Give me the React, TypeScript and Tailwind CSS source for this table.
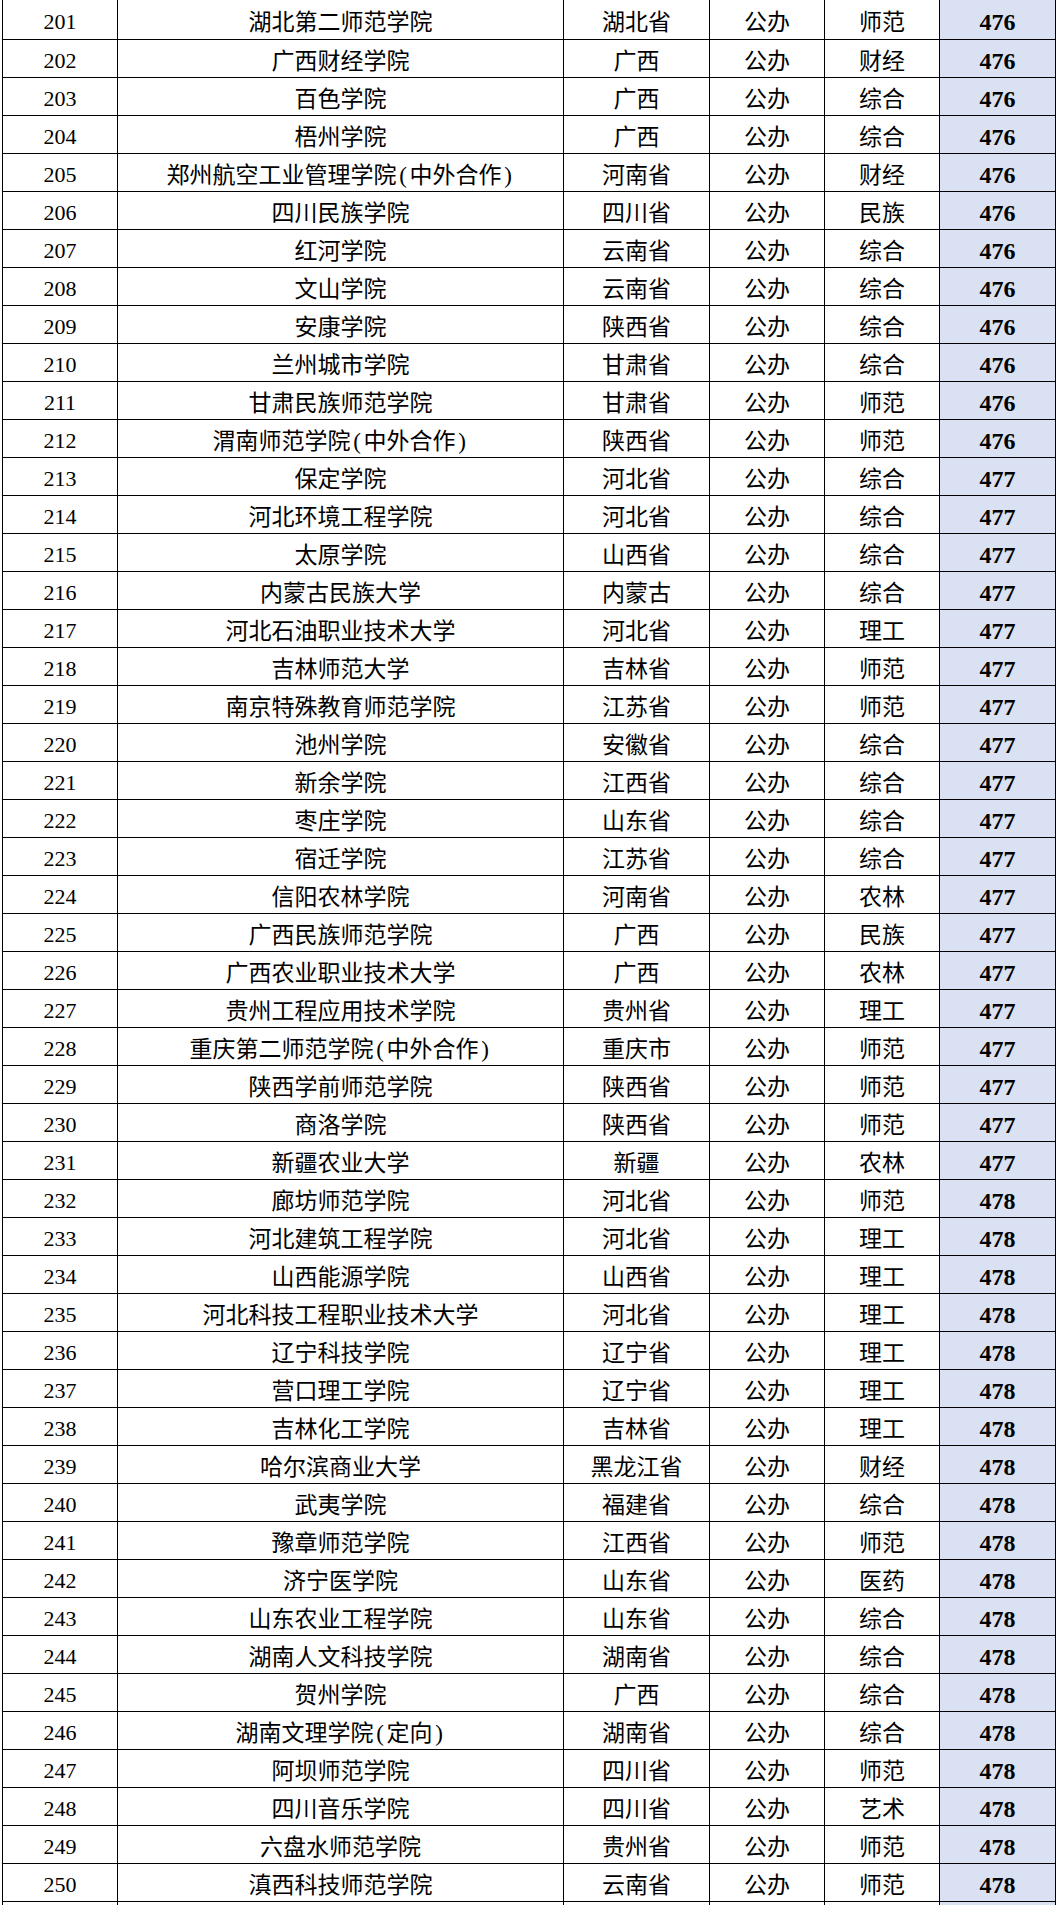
import React from 'react';

type School = [number, string, string, string, string, number];

const schools: School[] = [
  [201, '湖北第二师范学院', '湖北省', '公办', '师范', 476],
  [202, '广西财经学院', '广西', '公办', '财经', 476],
  [203, '百色学院', '广西', '公办', '综合', 476],
  [204, '梧州学院', '广西', '公办', '综合', 476],
  [205, '郑州航空工业管理学院(中外合作)', '河南省', '公办', '财经', 476],
  [206, '四川民族学院', '四川省', '公办', '民族', 476],
  [207, '红河学院', '云南省', '公办', '综合', 476],
  [208, '文山学院', '云南省', '公办', '综合', 476],
  [209, '安康学院', '陕西省', '公办', '综合', 476],
  [210, '兰州城市学院', '甘肃省', '公办', '综合', 476],
  [211, '甘肃民族师范学院', '甘肃省', '公办', '师范', 476],
  [212, '渭南师范学院(中外合作)', '陕西省', '公办', '师范', 476],
  [213, '保定学院', '河北省', '公办', '综合', 477],
  [214, '河北环境工程学院', '河北省', '公办', '综合', 477],
  [215, '太原学院', '山西省', '公办', '综合', 477],
  [216, '内蒙古民族大学', '内蒙古', '公办', '综合', 477],
  [217, '河北石油职业技术大学', '河北省', '公办', '理工', 477],
  [218, '吉林师范大学', '吉林省', '公办', '师范', 477],
  [219, '南京特殊教育师范学院', '江苏省', '公办', '师范', 477],
  [220, '池州学院', '安徽省', '公办', '综合', 477],
  [221, '新余学院', '江西省', '公办', '综合', 477],
  [222, '枣庄学院', '山东省', '公办', '综合', 477],
  [223, '宿迁学院', '江苏省', '公办', '综合', 477],
  [224, '信阳农林学院', '河南省', '公办', '农林', 477],
  [225, '广西民族师范学院', '广西', '公办', '民族', 477],
  [226, '广西农业职业技术大学', '广西', '公办', '农林', 477],
  [227, '贵州工程应用技术学院', '贵州省', '公办', '理工', 477],
  [228, '重庆第二师范学院(中外合作)', '重庆市', '公办', '师范', 477],
  [229, '陕西学前师范学院', '陕西省', '公办', '师范', 477],
  [230, '商洛学院', '陕西省', '公办', '师范', 477],
  [231, '新疆农业大学', '新疆', '公办', '农林', 477],
  [232, '廊坊师范学院', '河北省', '公办', '师范', 478],
  [233, '河北建筑工程学院', '河北省', '公办', '理工', 478],
  [234, '山西能源学院', '山西省', '公办', '理工', 478],
  [235, '河北科技工程职业技术大学', '河北省', '公办', '理工', 478],
  [236, '辽宁科技学院', '辽宁省', '公办', '理工', 478],
  [237, '营口理工学院', '辽宁省', '公办', '理工', 478],
  [238, '吉林化工学院', '吉林省', '公办', '理工', 478],
  [239, '哈尔滨商业大学', '黑龙江省', '公办', '财经', 478],
  [240, '武夷学院', '福建省', '公办', '综合', 478],
  [241, '豫章师范学院', '江西省', '公办', '师范', 478],
  [242, '济宁医学院', '山东省', '公办', '医药', 478],
  [243, '山东农业工程学院', '山东省', '公办', '综合', 478],
  [244, '湖南人文科技学院', '湖南省', '公办', '综合', 478],
  [245, '贺州学院', '广西', '公办', '综合', 478],
  [246, '湖南文理学院(定向)', '湖南省', '公办', '综合', 478],
  [247, '阿坝师范学院', '四川省', '公办', '师范', 478],
  [248, '四川音乐学院', '四川省', '公办', '艺术', 478],
  [249, '六盘水师范学院', '贵州省', '公办', '师范', 478],
  [250, '滇西科技师范学院', '云南省', '公办', '师范', 478],
];

const cols = 'grid grid-cols-[115px_446px_146px_115px_115px_116px]';
const cell = 'flex items-center justify-center border-r border-black pt-[5px]';

// brackets in the sheet are wide half-width ones, give them a bit of room
const Name: React.FC<{ text: string }> = ({ text }) => (
  <>
    {text.split(/([()])/).map((part, i) =>
      part === '(' || part === ')' ? (
        <span key={i} className="inline-block w-[13px] text-center">
          {part}
        </span>
      ) : (
        <span key={i}>{part}</span>
      )
    )}
  </>
);

const Row: React.FC<{ school: School; first: boolean }> = ({ school, first }) => {
  const [no, name, province, type, category, score] = school;
  return (
    <div className={`${cols} border-b border-black ${first ? 'h-[40px]' : 'h-[38px]'}`}>
      <div className={`${cell} text-[22px]`}>{no}</div>
      <div className={cell}>
        <Name text={name} />
      </div>
      <div className={cell}>{province}</div>
      <div className={cell}>{type}</div>
      <div className={cell}>{category}</div>
      <div className={`${cell} bg-[#d9e1f2] text-[24px] font-bold`}>{score}</div>
    </div>
  );
};

export default function App() {
  return (
    <div className="h-[1905px] w-[1056px] overflow-hidden bg-white text-black">
      <div
        className="ml-[2px] border-l border-black text-[23px] leading-none"
        style={{ fontFamily: '"Liberation Serif", "Noto Sans CJK SC", serif' }}
      >
        {schools.map((s, i) => (
          <Row key={s[0]} school={s} first={i === 0} />
        ))}
        <div className={`${cols} h-[10px]`}>
          <div className="border-r border-black" />
          <div className="border-r border-black" />
          <div className="border-r border-black" />
          <div className="border-r border-black" />
          <div className="border-r border-black" />
          <div className="border-r border-black bg-[#d9e1f2]" />
        </div>
      </div>
    </div>
  );
}
